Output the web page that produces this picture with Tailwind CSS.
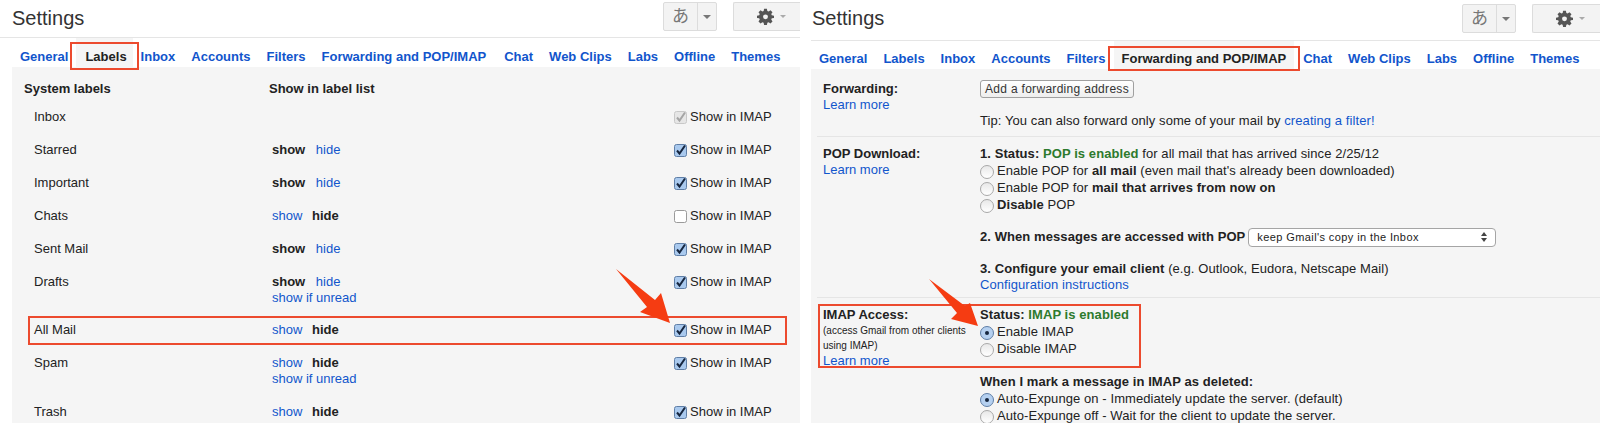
<!DOCTYPE html>
<html lang="en">
<head>
    <meta charset="UTF-8">
    <title>Gmail Settings</title>
    <script src="https://cdn.jsdelivr.net/npm/@tailwindcss/browser@4"></script>
</head>
<body class="bg-white">
<div class="relative flex w-[1600px] h-[423px] overflow-hidden bg-white font-['Liberation_Sans','Noto_Sans_CJK_JP',sans-serif] text-[13px] leading-[16px] text-[#222]">

    <!-- left: labels tab -->
    <section class="w-[800px] shrink-0">
        <header class="flex items-center justify-between h-[38px] border-b border-[#e5e5e5] pl-3">
            <h1 class="text-[20px] leading-[24px] text-[#333] -mt-[2px]">Settings</h1>
            <div class="flex items-center -mt-[4px]">
                <div class="flex h-[29px] w-[54px] border border-[#dcdcdc] rounded-[2px] bg-[#f3f3f3]">
                    <span class="flex items-center justify-center w-[34px] border-r border-[#dcdcdc] text-[17px] text-[#777]">あ</span>
                    <span class="flex items-center justify-center flex-1"><span class="border-x-[4px] border-t-[4px] border-x-transparent border-t-[#777]"></span></span>
                </div>
                <div class="flex items-center gap-[6px] h-[29px] w-[67px] ml-[16px] pl-[23px] border border-r-0 border-[#dcdcdc] rounded-l-[2px] bg-[#f3f3f3]">
                    <svg class="w-[17px] h-[17px] text-[#555]" viewBox="0 0 24 24" fill="currentColor"><path fill-rule="evenodd" d="M10 1h4l.6 3.100 1.800.8L19 3.100 21.900 6l-1.800 2.600.8 1.800L24 11v3l-3.100.6-.8 1.800 1.800 2.600-2.900 2.900-2.600-1.800-1.800.8L14 24h-4l-.6-3.100-1.800-.8L5 21.900 2.100 19l1.800-2.600-.8-1.800L0 14v-3l3.100-.6.8-1.800L2.100 6 5 3.100l2.600 1.800 1.800-.8zM12 9a3.500 3.500 0 1 0 0 7 3.500 3.500 0 0 0 0-7z"/></svg>
                    <span class="border-x-[3px] border-t-[3px] border-x-transparent border-t-[#aaa]"></span>
                </div>
            </div>
        </header>

        <nav class="flex h-[29px] pl-3 pt-[11px] font-bold text-[#15c]">
            <a class="px-2">General</a>
            <a class="relative pl-[9px] pr-[6px] bg-[#f5f5f5] -mt-[11px] pt-[11px] text-[#222]">Labels
                <span class="absolute left-[-6px] right-[-6px] top-[4px] bottom-[-3px] border-2 border-[#ec4a2e]"></span>
            </a>
            <a class="px-2">Inbox</a>
            <a class="px-2">Accounts</a>
            <a class="px-2">Filters</a>
            <a class="px-2">Forwarding and POP/IMAP</a>
            <a class="px-2 ml-[2px]">Chat</a>
            <a class="px-2">Web Clips</a>
            <a class="px-2">Labs</a>
            <a class="px-2">Offline</a>
            <a class="px-2">Themes</a>
        </nav>

        <div class="ml-3 h-[356px] bg-[#f5f5f5]">
            <div class="flex pl-3 pt-[14px] pb-[3px] font-bold">
                <span class="w-[245px]">System labels</span>
                <span>Show in label list</span>
            </div>

            <div class="flex h-[33px] pl-[22px] pt-[9px]">
                <span class="w-[238px]">Inbox</span>
                <span class="w-[402px]"></span>
                <label class="flex items-center gap-[3px] h-[16px]">
                    <svg class="w-[13px] h-[13px]" viewBox="0 0 13 13"><rect x=".5" y=".5" width="12" height="12" rx="2" fill="#e6e6e6" stroke="#c8c8c8"/><path d="M3 6.500l2.500 3L11 1.500" fill="none" stroke="#a5a5a5" stroke-width="2"/></svg>
                    Show in IMAP</label>
            </div>
            <div class="flex h-[33px] pl-[22px] pt-[9px]">
                <span class="w-[238px]">Starred</span>
                <span class="w-[402px]"><b class="mr-[7px]">show</b> <a class="text-[#15c]">hide</a></span>
                <label class="flex items-center gap-[3px] h-[16px]">
                    <svg class="w-[13px] h-[13px]" viewBox="0 0 13 13"><rect x=".5" y=".5" width="12" height="12" rx="2" fill="#a9c9ee" stroke="#5f7ea6"/><path d="M3 6.500l2.500 3L11 1.500" fill="none" stroke="#16263f" stroke-width="2"/></svg>
                    Show in IMAP</label>
            </div>
            <div class="flex h-[33px] pl-[22px] pt-[9px]">
                <span class="w-[238px]">Important</span>
                <span class="w-[402px]"><b class="mr-[7px]">show</b> <a class="text-[#15c]">hide</a></span>
                <label class="flex items-center gap-[3px] h-[16px]">
                    <svg class="w-[13px] h-[13px]" viewBox="0 0 13 13"><rect x=".5" y=".5" width="12" height="12" rx="2" fill="#a9c9ee" stroke="#5f7ea6"/><path d="M3 6.500l2.500 3L11 1.500" fill="none" stroke="#16263f" stroke-width="2"/></svg>
                    Show in IMAP</label>
            </div>
            <div class="flex h-[33px] pl-[22px] pt-[9px]">
                <span class="w-[238px]">Chats</span>
                <span class="w-[402px]"><a class="text-[#15c] mr-[6px]">show</a> <b>hide</b></span>
                <label class="flex items-center gap-[3px] h-[16px]">
                    <svg class="w-[13px] h-[13px]" viewBox="0 0 13 13"><rect x=".5" y=".5" width="12" height="12" rx="2" fill="#fff" stroke="#9a9a9a"/></svg>
                    Show in IMAP</label>
            </div>
            <div class="flex h-[33px] pl-[22px] pt-[9px]">
                <span class="w-[238px]">Sent Mail</span>
                <span class="w-[402px]"><b class="mr-[7px]">show</b> <a class="text-[#15c]">hide</a></span>
                <label class="flex items-center gap-[3px] h-[16px]">
                    <svg class="w-[13px] h-[13px]" viewBox="0 0 13 13"><rect x=".5" y=".5" width="12" height="12" rx="2" fill="#a9c9ee" stroke="#5f7ea6"/><path d="M3 6.500l2.500 3L11 1.500" fill="none" stroke="#16263f" stroke-width="2"/></svg>
                    Show in IMAP</label>
            </div>
            <div class="flex h-[48px] pl-[22px] pt-[9px]">
                <span class="w-[238px]">Drafts</span>
                <span class="w-[402px]"><b class="mr-[7px]">show</b> <a class="text-[#15c]">hide</a><br><a class="text-[#15c]">show if unread</a></span>
                <label class="flex items-center gap-[3px] h-[16px]">
                    <svg class="w-[13px] h-[13px]" viewBox="0 0 13 13"><rect x=".5" y=".5" width="12" height="12" rx="2" fill="#a9c9ee" stroke="#5f7ea6"/><path d="M3 6.500l2.500 3L11 1.500" fill="none" stroke="#16263f" stroke-width="2"/></svg>
                    Show in IMAP</label>
            </div>
            <div class="flex h-[33px] pl-[22px] pt-[9px]">
                <span class="w-[238px]">All Mail</span>
                <span class="w-[402px]"><a class="text-[#15c] mr-[6px]">show</a> <b>hide</b></span>
                <label class="flex items-center gap-[3px] h-[16px]">
                    <svg class="w-[13px] h-[13px]" viewBox="0 0 13 13"><rect x=".5" y=".5" width="12" height="12" rx="2" fill="#a9c9ee" stroke="#5f7ea6"/><path d="M3 6.500l2.500 3L11 1.500" fill="none" stroke="#16263f" stroke-width="2"/></svg>
                    Show in IMAP</label>
            </div>
            <div class="flex h-[49px] pl-[22px] pt-[9px]">
                <span class="w-[238px]">Spam</span>
                <span class="w-[402px]"><a class="text-[#15c] mr-[6px]">show</a> <b>hide</b><br><a class="text-[#15c]">show if unread</a></span>
                <label class="flex items-center gap-[3px] h-[16px]">
                    <svg class="w-[13px] h-[13px]" viewBox="0 0 13 13"><rect x=".5" y=".5" width="12" height="12" rx="2" fill="#a9c9ee" stroke="#5f7ea6"/><path d="M3 6.500l2.500 3L11 1.500" fill="none" stroke="#16263f" stroke-width="2"/></svg>
                    Show in IMAP</label>
            </div>
            <div class="flex h-[33px] pl-[22px] pt-[9px]">
                <span class="w-[238px]">Trash</span>
                <span class="w-[402px]"><a class="text-[#15c] mr-[6px]">show</a> <b>hide</b></span>
                <label class="flex items-center gap-[3px] h-[16px]">
                    <svg class="w-[13px] h-[13px]" viewBox="0 0 13 13"><rect x=".5" y=".5" width="12" height="12" rx="2" fill="#a9c9ee" stroke="#5f7ea6"/><path d="M3 6.500l2.500 3L11 1.500" fill="none" stroke="#16263f" stroke-width="2"/></svg>
                    Show in IMAP</label>
            </div>
        </div>
    </section>

    <!-- right: forwarding tab -->
    <section class="w-[789px] ml-[11px] shrink-0">
        <header class="flex items-center justify-between h-[41px] border-b border-[#e5e5e5]">
            <h1 class="text-[20px] leading-[24px] text-[#333] -mt-[4px] ml-[1px]">Settings</h1>
            <div class="flex items-center -mt-[3px]">
                <div class="flex h-[29px] w-[54px] border border-[#dcdcdc] rounded-[2px] bg-[#f3f3f3]">
                    <span class="flex items-center justify-center w-[34px] border-r border-[#dcdcdc] text-[17px] text-[#777]">あ</span>
                    <span class="flex items-center justify-center flex-1"><span class="border-x-[4px] border-t-[4px] border-x-transparent border-t-[#777]"></span></span>
                </div>
                <div class="flex items-center gap-[6px] h-[29px] w-[68px] ml-[16px] pl-[23px] border border-r-0 border-[#dcdcdc] rounded-l-[2px] bg-[#f3f3f3]">
                    <svg class="w-[17px] h-[17px] text-[#555]" viewBox="0 0 24 24" fill="currentColor"><path fill-rule="evenodd" d="M10 1h4l.6 3.100 1.800.8L19 3.100 21.900 6l-1.800 2.600.8 1.800L24 11v3l-3.100.6-.8 1.800 1.800 2.600-2.900 2.900-2.600-1.800-1.800.8L14 24h-4l-.6-3.100-1.800-.8L5 21.900 2.100 19l1.800-2.600-.8-1.800L0 14v-3l3.100-.6.8-1.800L2.100 6 5 3.100l2.600 1.800 1.800-.8zM12 9a3.500 3.500 0 1 0 0 7 3.500 3.500 0 0 0 0-7z"/></svg>
                    <span class="border-x-[3px] border-t-[3px] border-x-transparent border-t-[#aaa]"></span>
                </div>
            </div>
        </header>

        <nav class="flex h-[28px] pt-[10px] font-bold text-[#15c]">
            <a class="px-2">General</a>
            <a class="px-2">Labels</a>
            <a class="px-2">Inbox</a>
            <a class="px-2">Accounts</a>
            <a class="px-2">Filters</a>
            <a class="relative pl-[8px] pr-[8px] -mt-[10px] pt-[10px] bg-[#f5f5f5] text-[#222]">Forwarding and POP/IMAP
                <span class="absolute left-[-6px] right-[-6px] top-[5px] bottom-[-2px] border-2 border-[#ec4a2e]"></span>
            </a>
            <a class="px-2 ml-[1px]">Chat</a>
            <a class="px-2">Web Clips</a>
            <a class="px-2">Labs</a>
            <a class="px-2">Offline</a>
            <a class="px-2">Themes</a>
        </nav>

        <div class="h-[354px] bg-[#f5f5f5] pl-[6px]">
            <div class="flex h-[68px] pt-[12px] border-b border-[#e5e5e5]">
                <div class="w-[163px] pl-[6px]">
                    <b class="block">Forwarding:</b>
                    <a class="text-[#15c]">Learn more</a>
                </div>
                <div class="tracking-[0.08px]">
                    <button class="block h-[18px] w-[154px] -mt-[1px] border border-[#a0a0a0] rounded-[3px] bg-gradient-to-b from-white to-[#eeeeee] text-[12px] leading-[16px] tracking-[0.3px] text-[#333]">Add a forwarding address</button>
                    <p class="mt-[15px]">Tip: You can also forward only some of your mail by <a class="text-[#15c]">creating a filter!</a></p>
                </div>
            </div>

            <div class="flex h-[161px] pt-[9px] border-b border-[#e5e5e5]">
                <div class="w-[163px] pl-[6px]">
                    <b class="block">POP Download:</b>
                    <a class="text-[#15c]">Learn more</a>
                </div>
                <div class="tracking-[0.08px]">
                    <p><b>1. Status: <span class="text-[#2d7a2d]">POP is enabled</span></b> for all mail that has arrived since 2/25/12</p>
                    <div class="flex items-center h-[17px]"><span class="w-[14px] h-[14px] mr-[3px] mt-[2px] rounded-full border border-[#a8a8a8] bg-gradient-to-b from-[#e8e8e8] to-white"></span><span>Enable POP for <b>all mail</b> (even mail that's already been downloaded)</span></div>
                    <div class="flex items-center h-[17px]"><span class="w-[14px] h-[14px] mr-[3px] mt-[2px] rounded-full border border-[#a8a8a8] bg-gradient-to-b from-[#e8e8e8] to-white"></span><span>Enable POP for <b>mail that arrives from now on</b></span></div>
                    <div class="flex items-center h-[17px]"><span class="w-[14px] h-[14px] mr-[3px] mt-[2px] rounded-full border border-[#a8a8a8] bg-gradient-to-b from-[#e8e8e8] to-white"></span><span><b>Disable</b> POP</span></div>
                    <div class="flex items-center mt-[14px] h-[20px]">
                        <b>2. When messages are accessed with POP</b>
                        <span class="flex items-center justify-between w-[248px] h-[19px] ml-[3px] pl-[8px] pr-[8px] border border-[#a5a5a5] rounded-[4px] bg-white text-[11px] tracking-[0.4px]">keep Gmail's copy in the Inbox
                            <svg class="w-[6px] h-[10px]" viewBox="0 0 6 10" fill="#444"><path d="M3 0l3 4H0zM3 10L0 6h6z"/></svg>
                        </span>
                    </div>
                    <p class="mt-[14px]"><b>3. Configure your email client</b> (e.g. Outlook, Eudora, Netscape Mail)</p>
                    <a class="text-[#15c]">Configuration instructions</a>
                </div>
            </div>

            <div class="flex pt-[9px]">
                <div class="w-[163px] pl-[6px]">
                    <b class="block">IMAP Access:</b>
                    <p class="text-[10px] leading-[15px]">(access Gmail from other clients<br>using IMAP)</p>
                    <a class="text-[#15c]">Learn more</a>
                </div>
                <div class="tracking-[0.08px]">
                    <p><b>Status: <span class="text-[#2d7a2d]">IMAP is enabled</span></b></p>
                    <div class="flex items-center h-[17px]"><span class="flex items-center justify-center w-[14px] h-[14px] mr-[3px] mt-[2px] rounded-full border border-[#5f7ea6] bg-[#b5d0f0]"><span class="w-[4px] h-[4px] rounded-full bg-[#16263f]"></span></span><span>Enable IMAP</span></div>
                    <div class="flex items-center h-[17px]"><span class="w-[14px] h-[14px] mr-[3px] mt-[2px] rounded-full border border-[#a8a8a8] bg-gradient-to-b from-[#e8e8e8] to-white"></span><span>Disable IMAP</span></div>
                    <p class="mt-[17px]"><b>When I mark a message in IMAP as deleted:</b></p>
                    <div class="flex items-center h-[17px]"><span class="flex items-center justify-center w-[14px] h-[14px] mr-[3px] mt-[2px] rounded-full border border-[#5f7ea6] bg-[#b5d0f0]"><span class="w-[4px] h-[4px] rounded-full bg-[#16263f]"></span></span><span>Auto-Expunge on - Immediately update the server. (default)</span></div>
                    <div class="flex items-center h-[17px]"><span class="w-[14px] h-[14px] mr-[3px] mt-[2px] rounded-full border border-[#a8a8a8] bg-gradient-to-b from-[#e8e8e8] to-white"></span><span>Auto-Expunge off - Wait for the client to update the server.</span></div>
                </div>
            </div>
        </div>
    </section>

    <!-- annotations drawn over the page -->
    <div class="absolute left-[28px] top-[316px] w-[759px] h-[29px] border-2 border-[#ec4a2e]"></div>
    <div class="absolute left-[818px] top-[304px] w-[323px] h-[64px] border-2 border-[#ec4a2e]"></div>
    <svg class="absolute left-0 top-0 w-[1600px] h-[423px] pointer-events-none" viewBox="0 0 1600 423">
        <polygon points="616,269 655,300 661,293 670,323 640,312 647,307" fill="#f53c12"/>
        <polygon points="929,279 965,306 970,303 978,326 951,319 957,313" fill="#f53c12"/>
    </svg>
</div>
</body>
</html>
